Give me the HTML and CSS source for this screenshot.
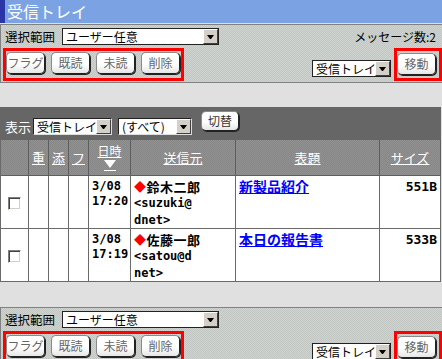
FILE: index.html
```html
<!DOCTYPE html>
<html>
<head>
	<meta http-equiv="Content-Type" content="text/html; charset=utf-8">
	<title>受信トレイ</title>
	<link rel="stylesheet" href="styles.css">
</head>
<body>

	<div class="title">受信トレイ</div>

	<div class="panel">
		<div class="panel-row">
			<span class="label">選択範囲</span>
			<span class="select select-range"><span class="select-text">ユーザー任意</span><span class="select-btn"></span></span>
			<span class="count">メッセージ数:2</span>
		</div>
		<div class="panel-actions">
			<div class="mark mark-left">
				<button class="btn">フラグ</button>
				<button class="btn">既読</button>
				<button class="btn">未読</button>
				<button class="btn">削除</button>
			</div>
			<div class="move">
				<span class="select select-folder"><span class="select-text">受信トレイ</span><span class="select-btn"></span></span>
				<div class="mark mark-right">
					<button class="btn">移動</button>
				</div>
			</div>
		</div>
	</div>

	<div class="list-bar">
		<span class="bar-label">表示</span>
		<span class="select select-box"><span class="select-text">受信トレイ</span><span class="select-btn"></span></span>
		<span class="select select-filter"><span class="select-text">(すべて)</span><span class="select-btn"></span></span>
		<button class="btn btn-switch">切替</button>
	</div>

	<table class="list">
		<thead>
			<tr>
				<th class="c-check"></th>
				<th class="c-flag"><a href="#">重</a></th>
				<th class="c-flag"><a href="#">添</a></th>
				<th class="c-flag"><a href="#">フ</a></th>
				<th class="c-date"><a href="#" class="sort">日時</a><a href="#" class="sort-arrow"></a></th>
				<th class="c-from"><a href="#">送信元</a></th>
				<th class="c-subject"><a href="#">表題</a></th>
				<th class="c-size"><a href="#">サイズ</a></th>
			</tr>
		</thead>
		<tbody>
			<tr class="row-1">
				<td class="cell-check"><input type="checkbox" class="check"></td>
				<td></td>
				<td></td>
				<td></td>
				<td class="mono">3/08<br>17:20</td>
				<td><span class="name"><span class="dot">◆</span>鈴木二郎</span><br><span class="mono">&lt;suzuki@<br>dnet&gt;</span></td>
				<td><a href="#" class="subject">新製品紹介</a></td>
				<td class="size">551B</td>
			</tr>
			<tr class="row-2">
				<td class="cell-check"><input type="checkbox" class="check"></td>
				<td></td>
				<td></td>
				<td></td>
				<td class="mono">3/08<br>17:19</td>
				<td><span class="name"><span class="dot">◆</span>佐藤一郎</span><br><span class="mono">&lt;satou@d<br>net&gt;</span></td>
				<td><a href="#" class="subject">本日の報告書</a></td>
				<td class="size">533B</td>
			</tr>
		</tbody>
	</table>

	<div class="panel panel-bottom">
		<div class="panel-row">
			<span class="label">選択範囲</span>
			<span class="select select-range"><span class="select-text">ユーザー任意</span><span class="select-btn"></span></span>
		</div>
		<div class="panel-actions">
			<div class="mark mark-left">
				<button class="btn">フラグ</button>
				<button class="btn">既読</button>
				<button class="btn">未読</button>
				<button class="btn">削除</button>
			</div>
			<div class="move">
				<span class="select select-folder"><span class="select-text">受信トレイ</span><span class="select-btn"></span></span>
				<div class="mark mark-right">
					<button class="btn">移動</button>
				</div>
			</div>
		</div>
	</div>

</body>
</html>
```

FILE: styles.css
```css
* {padding: 0; margin: 0; box-sizing: border-box;}
body {width: 442px; background: #e0e0e0; color: #000; font-family: "Noto Sans CJK JP", sans-serif; font-size: 12px;}

.title {height: 23px; margin-bottom: 1px; padding-left: 2px; border-left: 5px solid #2a36a6; background: #7ba3e3; color: #fff; font-size: 16px; line-height: 23px;}

.panel {padding: 3px 0 1px 2px; border: 1px solid #808080; border-right: 0; background: repeating-conic-gradient(#c2c6c2 0 25%, #d0d4d0 0 50%) 0 0/2px 2px;}
.panel-bottom {margin-top: 25px;}
.panel-row {display: flex; align-items: center; height: 17px; margin-bottom: 3px;}
.label {margin: 0 7px 0 2px; font-size: 12.5px; line-height: 17px;}
.count {margin-left: auto; padding-right: 6px; line-height: 17px;}
.panel-actions {display: flex; justify-content: space-between; align-items: flex-end;}
.move {display: flex; align-items: flex-end; gap: 3px;}

.mark {display: flex; gap: 6px; border: 3px solid #f00;}
.mark-left {padding: 1px 1px 4px 0;}
.mark-right {padding: 2px 3px 3px 0;}

.btn {width: 39px; height: 22px; border: 1px solid #8a8a8a; border-right-color: #222; border-bottom-color: #222; border-radius: 5px; box-shadow: 1px 1px 0 #222; background: linear-gradient(#fff 55%, #e6e6e6); color: #666; font-family: inherit; font-size: 12px; line-height: 18px;}
.btn-switch {width: 38px; height: 20px; margin: 0 0 4px 9px; color: #333;}

.select {display: inline-flex; height: 17px; border: 1px solid #222; background: #fff;}
.select-text {flex: 1; padding-left: 3px; overflow: hidden; white-space: nowrap; font-size: 12px; line-height: 15px;}
.select-btn {display: flex; align-items: center; justify-content: center; width: 15px; border: 1px solid; border-color: #fff #404040 #404040 #fff; background: #d4d0c8;}
.select-btn::after {content: ""; width: 1px; border-top: 4px solid #000; border-left: 3px solid transparent; border-right: 3px solid transparent;}
.select-range {width: 157px;}
.select-folder {width: 79px; margin-bottom: 4px;}
.select-box {width: 79px; border-color: #222 #ddd #ddd #222;}
.select-filter {width: 74px; margin-left: 6px; border-color: #222 #ddd #ddd #222;}

.list-bar {display: flex; align-items: flex-end; width: 441px; height: 33px; margin-top: 24px; padding: 0 0 5px 5px; background: #666;}
.bar-label {margin-right: 2px; color: #fff; font-size: 13px; line-height: 17px;}

.list {width: 441px; table-layout: fixed; border-collapse: separate; border-spacing: 0; border-left: 1px solid #6a6a6a;}
.list th {height: 36px; border-right: 1px solid #5e5e5e; border-bottom: 1px solid #5e5e5e; background: repeating-conic-gradient(#868686 0 25%, #929292 0 50%) 0 0/2px 2px; font-weight: normal; font-size: 13px; line-height: 14px; text-align: center; vertical-align: middle;}
.list th a {color: #fff;}
.c-check {width: 28px;}
.c-flag {width: 20px;}
.c-date {width: 42px;}
.c-from {width: 105px;}
.c-subject {width: 144px;}
.c-size {width: 61px;}
.list th a.sort {display: block; width: 28px; margin: 0 auto; font-size: 12px; line-height: 14px;}
.sort-arrow {display: block; width: 12px; height: 12px; margin: 1px auto 0; padding-top: 1px; border-bottom: 1px solid #fff;}
.sort-arrow::before {content: ""; display: block; border-top: 8px solid #fff; border-left: 6px solid transparent; border-right: 6px solid transparent;}

.list td {padding: 3px 3px 0; border-right: 1px solid #6a6a6a; border-bottom: 1px solid #6a6a6a; background: #fff; line-height: 15px; vertical-align: top;}
.row-1 {height: 49px;}
.row-2 {height: 48px;}
.list td.cell-check {padding: 3px 0 0; text-align: center; vertical-align: middle;}
.check {-webkit-appearance: none; appearance: none; display: block; width: 13px; height: 13px; margin: 0 auto; border: 1px solid; border-color: #808080 #fff #fff #808080; box-shadow: inset 1px 1px 0 #404040, inset -1px -1px 0 #d4d0c8; background: #fff;}

.mono {font-family: "DejaVu Sans Mono", monospace; font-weight: bold; font-size: 12px;}
.name {font-weight: bold; font-size: 13px; letter-spacing: 0.5px;}
.dot {color: #f00; font-size: 12px;}
.subject {color: #00f; font-weight: bold; font-size: 14px;}
.list td.size {padding-right: 3px; text-align: right; font-family: "DejaVu Sans Mono", monospace; font-weight: bold; font-size: 13px;}
```
